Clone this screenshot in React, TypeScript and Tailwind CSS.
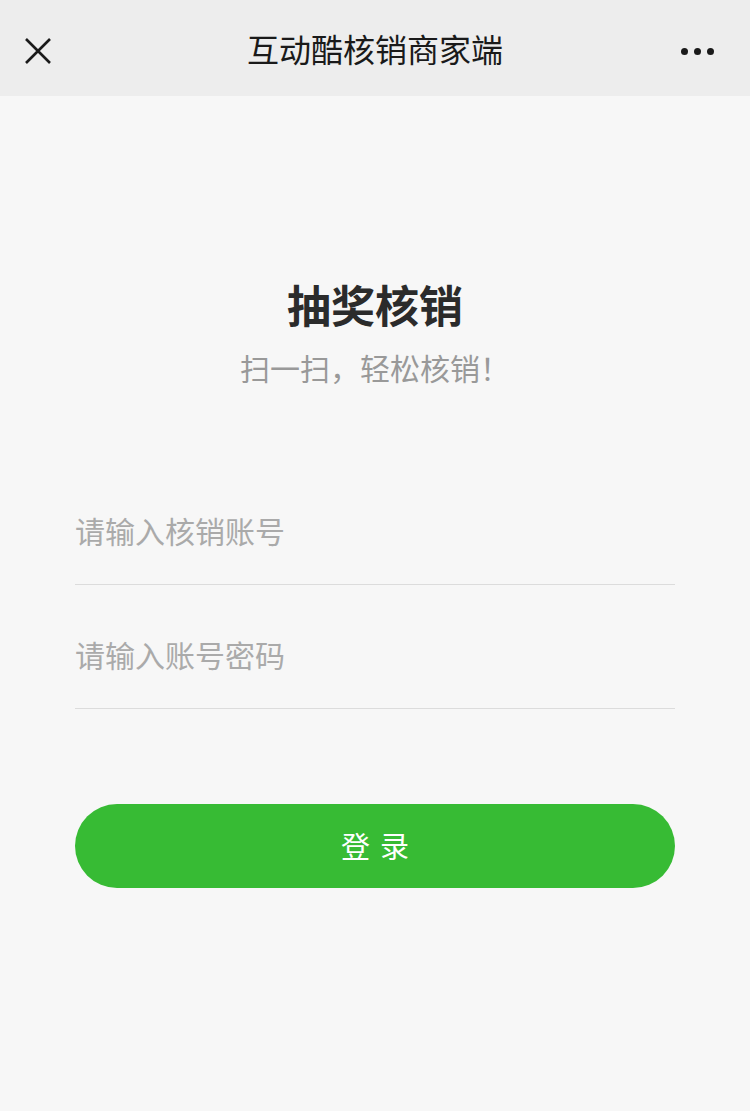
import React from 'react';

const font = { fontFamily: '"Noto Sans CJK SC", "Noto Sans", sans-serif' };

export default function App() {
  return (
    <div className="min-h-[1111px] w-[750px] bg-[#f7f7f7]" style={font}>
      {/* top bar */}
      <div className="grid h-[96px] grid-cols-[1fr_auto_1fr] items-center bg-[#ededed] px-6">
        <svg width="30" height="30" viewBox="0 0 30 30" className="ml-[-1px] mt-[6px]">
          <path d="M3 3 L27 27 M27 3 L3 27" stroke="#1a1a1a" strokeWidth="2.6" />
        </svg>
        <div className="text-[32px] text-[#1a1a1a]">互动酷核销商家端</div>
        <div className="mr-[12px] mt-[6px] flex justify-end gap-[6px]">
          <span className="h-[7px] w-[7px] rounded-full bg-[#1a1a1a]" />
          <span className="h-[7px] w-[7px] rounded-full bg-[#1a1a1a]" />
          <span className="h-[7px] w-[7px] rounded-full bg-[#1a1a1a]" />
        </div>
      </div>

      {/* heading */}
      <div className="flex flex-col items-center pt-[178px]">
        <h1 className="text-[44px] font-bold leading-[60px] text-[#2b2b2b]">抽奖核销</h1>
        <p className="mt-[13px] text-[30px] leading-[40px] text-[#999999]">扫一扫，轻松核销！</p>
      </div>

      {/* form */}
      <div className="mx-[75px] mt-[74px]">
        <div className="flex h-[124px] items-end border-b border-[#dcdcdc] pb-[34px]">
          <input
            placeholder="请输入核销账号"
            className="h-[40px] w-full bg-transparent text-[30px] text-[#333] outline-none placeholder:text-[#aaaaaa]"
            style={font}
          />
        </div>
        <div className="flex h-[124px] items-end border-b border-[#dcdcdc] pb-[34px]">
          <input
            type="password"
            placeholder="请输入账号密码"
            className="h-[40px] w-full bg-transparent text-[30px] text-[#333] outline-none placeholder:text-[#aaaaaa]"
            style={font}
          />
        </div>
        <button
          className="mt-[95px] flex h-[84px] w-full items-center justify-center rounded-full bg-[#37bb34] pl-[10px] text-[29px] tracking-[10px] text-white"
          style={font}
        >
          登录
        </button>
      </div>
    </div>
  );
}
